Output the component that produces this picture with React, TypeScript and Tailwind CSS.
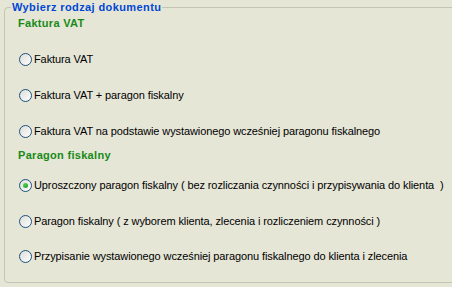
const faktura = [
  { label: "Faktura VAT", checked: false },
  { label: "Faktura VAT + paragon fiskalny", checked: false },
  { label: "Faktura VAT na podstawie wystawionego wcześniej paragonu fiskalnego", checked: false },
];

const paragon = [
  { label: "Uproszczony paragon fiskalny ( bez rozliczania czynności i przypisywania do klienta  )", checked: true },
  { label: "Paragon fiskalny ( z wyborem klienta, zlecenia i rozliczeniem czynności )", checked: false },
  { label: "Przypisanie wystawionego wcześniej paragonu fiskalnego do klienta i zlecenia", checked: false },
];

function Radio({ label, checked, className }: { label: string; checked: boolean; className: string }) {
  return (
    <label className={`flex h-[14px] items-center pl-[1px] ${className}`}>
      <span className="flex h-[13px] w-[13px] shrink-0 items-center justify-center rounded-full border border-[#1c5180] bg-gradient-to-br from-[#dcdcd7] to-[#ffffff]">
        {checked && (
          <span className="h-[5px] w-[5px] rounded-full bg-gradient-to-br from-[#55d655] to-[#21a121]" />
        )}
      </span>
      <span className="ml-[2px] whitespace-pre text-[11px] leading-[14px] tracking-[-0.1px] text-black">{label}</span>
    </label>
  );
}

export default function App() {
  return (
    <div
      className="h-[287px] w-[452px] overflow-hidden bg-[#e6e6d7] pl-[4px]"
      style={{ fontFamily: '"Liberation Sans", Arial, sans-serif' }}
    >
      <fieldset className="w-[470px] rounded-[4px] border border-[#c5c5b3] pl-[13px] pb-[19px]">
        <legend className="ml-[-7px] px-[1px] text-[11px] font-bold leading-[14px] tracking-[0.4px] text-[#0046d5]">
          Wybierz rodzaj dokumentu
        </legend>

        <div className="mt-[2px] h-[14px] text-[11px] font-bold leading-[14px] tracking-[0.3px] text-[#178a17]">Faktura VAT</div>
        <Radio {...faktura[0]} className="mt-[22px]" />
        <Radio {...faktura[1]} className="mt-[22px]" />
        <Radio {...faktura[2]} className="mt-[22px]" />

        <div className="mt-[10px] h-[14px] text-[11px] font-bold leading-[14px] tracking-[0.3px] text-[#178a17]">Paragon fiskalny</div>
        <Radio {...paragon[0]} className="mt-[16px]" />
        <Radio {...paragon[1]} className="mt-[22px]" />
        <Radio {...paragon[2]} className="mt-[21px]" />
      </fieldset>
    </div>
  );
}
